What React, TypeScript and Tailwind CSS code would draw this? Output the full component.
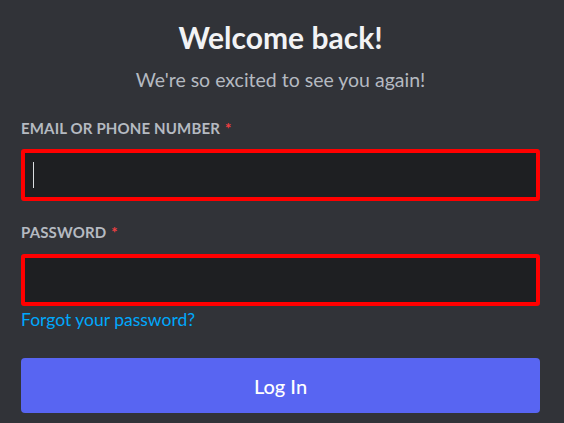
// LoginForm — "Welcome back!" sign-in card, dark theme, with both inputs flagged in red.

function FieldLabel({ text }: { text: string }) {
  return (
    <div className="h-[20px] text-[15px] leading-[20px] font-bold uppercase tracking-[0.01em] text-[#b5bac1]">
      {text}
      <span className="ml-[5px] text-[#f23f42]">*</span>
    </div>
  )
}

function Field({ cursor }: { cursor?: boolean }) {
  return (
    <div className="h-[52px] border-[4px] border-[#ff0000] rounded-[3px] bg-[#1e1f22] flex items-center pl-[8px]">
      {cursor && <div className="w-px h-[26px] bg-[#dbdee1]" />}
    </div>
  )
}

export default function App() {
  return (
    <div
      className="min-h-screen bg-[#313338] pl-[21px] pr-[24px] pt-[19px]"
      style={{ fontFamily: 'Lato, "Noto Sans", sans-serif' }}
    >
      {/* ── HEADER ── */}
      <h1 className="text-center text-[30px] leading-[37px] font-bold text-[#f2f3f5]">Welcome back!</h1>
      <p className="mt-[11px] text-center text-[19.5px] leading-[25px] text-[#b5bac1]">
        We're so excited to see you again!
      </p>

      {/* ── EMAIL ── */}
      <div className="mt-[26px]">
        <FieldLabel text="Email or Phone Number" />
        <div className="mt-[11px]">
          <Field cursor />
        </div>
      </div>

      {/* ── PASSWORD ── */}
      <div className="mt-[21px]">
        <FieldLabel text="Password" />
        <div className="mt-[12px]">
          <Field />
        </div>
      </div>

      <div className="mt-[3px] text-[17.5px] leading-[22px] text-[#00a8fc]">Forgot your password?</div>

      {/* ── SUBMIT ── */}
      <button className="mt-[27px] w-full h-[55px] rounded-[4px] bg-[#5865f2] text-white text-[20px] font-medium">
        Log In
      </button>
    </div>
  )
}
